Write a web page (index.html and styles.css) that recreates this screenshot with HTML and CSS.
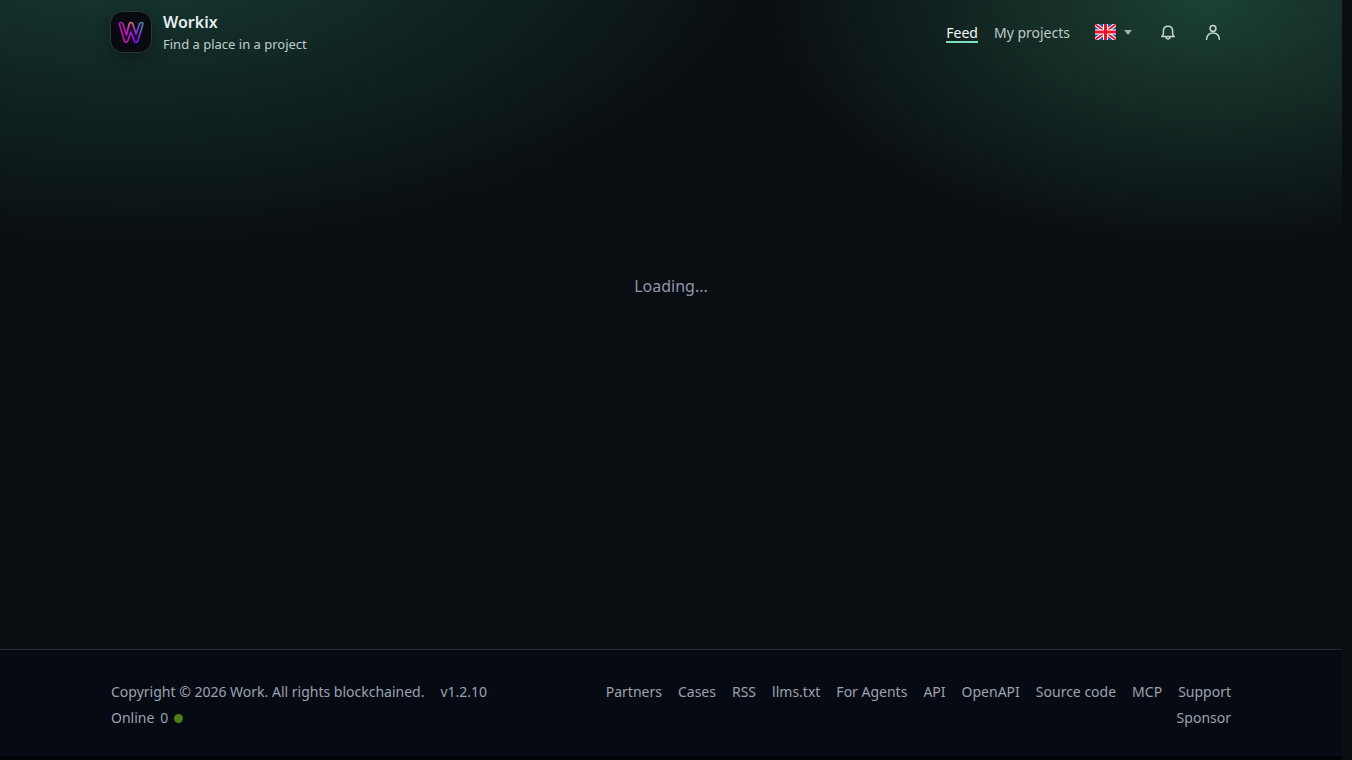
FILE: index.html
```html
<!DOCTYPE html>
<html lang="en">
<head>
<meta charset="utf-8">
<meta name="viewport" content="width=device-width, initial-scale=1">
<title>Workix</title>
<link rel="stylesheet" href="styles.css">
</head>
<body>
<div class="page">
  <header class="header">
    <div class="container header-row">
      <a class="brand" href="#">
        <svg class="brand-logo" viewBox="0 0 40 40" aria-hidden="true">
          <defs>
            <linearGradient id="neon" gradientUnits="userSpaceOnUse" x1="8" y1="22" x2="32" y2="16">
              <stop offset="0" stop-color="#b414a8"/>
              <stop offset=".36" stop-color="#c01cb4"/>
              <stop offset=".6" stop-color="#8a20d8"/>
              <stop offset="1" stop-color="#4a8fb0"/>
            </linearGradient>
            <linearGradient id="arch" gradientUnits="userSpaceOnUse" x1="0" y1="10" x2="0" y2="23">
              <stop offset="0" stop-color="#d08a48"/>
              <stop offset="1" stop-color="#d01cb8" stop-opacity="0"/>
            </linearGradient>
            <linearGradient id="base" gradientUnits="userSpaceOnUse" x1="0" y1="18" x2="0" y2="31">
              <stop offset="0" stop-color="#7a18e0" stop-opacity="0"/>
              <stop offset="1" stop-color="#6a10e8"/>
            </linearGradient>
          </defs>
          <path class="logo-glow" d="M10 12l5 17 5-15 5 15 5-17"/>
          <path class="logo-line" stroke="url(#neon)" d="M8.500 12.500Q8 10.500 10 10.500Q11.500 10.500 12 12L15.500 23L18 12.500Q18.500 10.500 20 10.500Q21.500 10.500 22 12.500L25 22L28.500 12Q29 10.500 30.500 10.500Q32.300 10.500 31.800 12.500L27 28.500Q26.400 30.300 25 30.300Q23.700 30.300 23.200 28.500L20 20L17 28.500Q16.500 30.300 15.200 30.300Q13.700 30.300 13.200 28.500Z"/>
          <path class="logo-line" stroke="url(#arch)" d="M15.500 23L18 12.500Q18.500 10.500 20 10.500Q21.500 10.500 22 12.500L25 22"/>
          <path class="logo-line" stroke="url(#base)" d="M20 20L23.200 28.500Q23.700 30.300 25 30.300Q26.400 30.300 27 28.500L30 18"/>
        </svg>
        <span class="brand-text">
          <strong class="brand-name">Workix</strong>
          <span class="brand-tagline">Find a place in a project</span>
        </span>
      </a>
      <nav class="nav" aria-label="Main">
        <a class="nav-link nav-link-active" href="#" aria-current="page">Feed</a>
        <a class="nav-link" href="#">My projects</a>
        <div class="nav-tools">
          <button class="language" type="button" aria-label="Language: English">
            <svg class="flag" viewBox="0 0 21 16" aria-hidden="true">
              <path fill="#3445a8" d="M0 0h21v16H0z"/>
              <path stroke="#fff" stroke-width="4" d="M0 0l21 16M21 0L0 16"/>
              <path stroke="#e5182b" stroke-width="2" d="M0 0l21 16M21 0L0 16"/>
              <path stroke="#fff" stroke-width="5" d="M10.500 0v16M0 8h21"/>
              <path stroke="#e5182b" stroke-width="3" d="M10.500 0v16M0 8h21"/>
            </svg>
            <svg class="caret" viewBox="0 0 8 5" aria-hidden="true"><path d="M0 0h8L4 5z"/></svg>
          </button>
          <button class="icon-button" type="button" aria-label="Notifications">
            <svg class="icon" viewBox="0 0 16 16" aria-hidden="true"><path d="M1.700 12.600C3 11.800 3.400 10.700 3.400 9V7C3.400 4.100 5.300 2.200 8 2.200s4.600 1.900 4.600 4.800v2c0 1.700.4 2.800 1.700 3.600zM5.800 12.800c.3 1.500 1.100 2.100 2.200 2.100s1.900-.6 2.200-2.100"/></svg>
          </button>
          <button class="icon-button" type="button" aria-label="Profile">
            <svg class="icon" viewBox="0 0 16 16" aria-hidden="true"><circle cx="8" cy="4.500" r="2.900"/><path d="M1.600 15.300c.3-3.800 2.700-6.200 6.400-6.200s6.100 2.400 6.400 6.200"/></svg>
          </button>
        </div>
      </nav>
    </div>
  </header>
  <main class="main">
    <p class="loading" role="status">Loading...</p>
  </main>
  <footer class="footer">
    <div class="container footer-row">
      <div class="footer-info">
        <div class="copyright"><span>Copyright © 2026 Work. All rights blockchained.</span><span>v1.2.10</span></div>
        <div class="online"><span>Online</span><span>0</span><span class="online-dot"></span></div>
      </div>
      <nav class="footer-links" aria-label="Footer">
        <a href="#">Partners</a>
        <a href="#">Cases</a>
        <a href="#">RSS</a>
        <a href="#">llms.txt</a>
        <a href="#">For Agents</a>
        <a href="#">API</a>
        <a href="#">OpenAPI</a>
        <a href="#">Source code</a>
        <a href="#">MCP</a>
        <a href="#">Support</a>
        <a href="#">Sponsor</a>
      </nav>
    </div>
  </footer>
</div>
</body>
</html>
```

FILE: styles.css
```css
* {
  box-sizing: border-box;
}

html {
  background: #0a0d12;
}

body {
  margin: 0;
  padding-right: 10px;
  font-family: "Noto Sans", sans-serif;
  font-size: 14px;
  line-height: 20px;
  color: #9ca3af;
}

a {
  color: inherit;
  text-decoration: none;
}

button {
  border: 0;
  padding: 0;
  background: none;
  color: inherit;
  font: inherit;
  cursor: pointer;
}

.page {
  display: flex;
  flex-direction: column;
  min-height: 100vh;
  border-bottom: 4px solid #020306;
  background:
    radial-gradient(1200px 600px at 10% -10%, #173d33, transparent 55%),
    radial-gradient(900px 500px at 90% 0%, #1b4134, transparent 50%),
    #0a0d12;
}

.container {
  width: 100%;
  max-width: 1152px;
  margin: 0 auto;
  padding: 0 16px;
}

.header-row {
  display: flex;
  align-items: center;
  justify-content: space-between;
  height: 64px;
}

.brand {
  display: flex;
  align-items: center;
  gap: 12px;
}

.brand-logo {
  width: 40px;
  height: 40px;
  border-radius: 12px;
  background: #090911;
  box-shadow: 0 0 0 1px #273732, 0 6px 16px rgba(0, 0, 0, 0.35);
}

.logo-line {
  fill: none;
  stroke-width: 1.5;
  stroke-linejoin: round;
}

.logo-glow {
  fill: none;
  stroke: #420a55;
  stroke-width: 6;
  stroke-linejoin: round;
  opacity: 0.45;
}

.brand-text {
  display: flex;
  flex-direction: column;
}

.brand-name {
  font-size: 16px;
  font-weight: 600;
  line-height: 24px;
  color: #e5edf0;
}

.brand-tagline {
  font-size: 13px;
  color: #c0ccce;
}

.nav {
  display: flex;
  align-items: center;
  gap: 16px;
}

.nav-link {
  padding-top: 4px;
  line-height: 16px;
  color: #becac9;
  border-bottom: 2px solid transparent;
}

.nav-link-active {
  color: #f4f8f7;
  border-color: #79dfbd;
}

.nav-tools {
  display: flex;
  align-items: center;
  gap: 8px;
}

.language {
  display: flex;
  align-items: center;
  gap: 8px;
  padding: 6px 9px;
}

.flag {
  width: 21px;
  height: 16px;
  border-radius: 2px;
}

.caret {
  width: 8px;
  height: 5px;
  fill: #9fb2b0;
}

.icon-button {
  display: grid;
  place-items: center;
  width: 37px;
  height: 37px;
}

.icon {
  width: 16px;
  height: 16px;
  fill: none;
  stroke: #c5d7d2;
  stroke-width: 1.5;
  stroke-linecap: round;
  stroke-linejoin: round;
}

.main {
  flex: 1;
  padding: 210px 16px 0;
}

.loading {
  margin: 0;
  font-size: 16px;
  line-height: 24px;
  text-align: center;
  color: #8f98aa;
}

.footer {
  padding: 32px 0 28px;
  border-top: 1px solid #292d32;
  background: #060a12;
}

.footer-row {
  display: flex;
  justify-content: space-between;
  gap: 16px;
}

.footer-info {
  display: flex;
  flex-direction: column;
  gap: 6px;
}

.copyright {
  display: flex;
  gap: 16px;
}

.online {
  display: flex;
  align-items: center;
  gap: 6px;
}

.online-dot {
  width: 9px;
  height: 9px;
  border-radius: 50%;
  background: #4f7d18;
}

.footer-links {
  display: flex;
  flex: 0 1 640px;
  flex-wrap: wrap;
  justify-content: flex-end;
  gap: 6px 16px;
}
```
